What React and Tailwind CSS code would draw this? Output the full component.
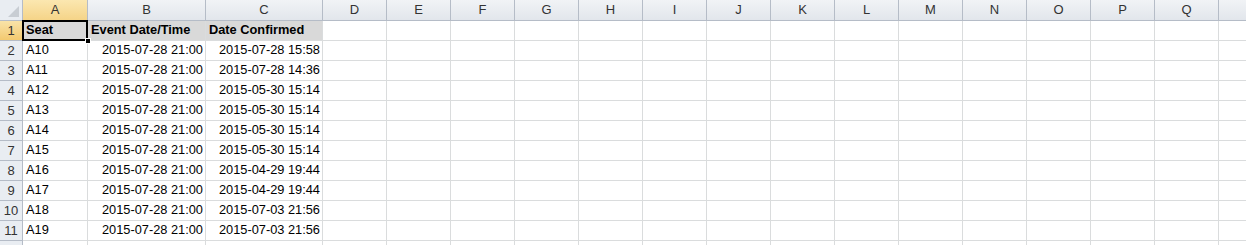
const cols = ["A", "B", "C", "D", "E", "F", "G", "H", "I", "J", "K", "L", "M", "N", "O", "P", "Q", ""];

const rows = [
  ["A10", "2015-07-28 21:00", "2015-07-28 15:58"],
  ["A11", "2015-07-28 21:00", "2015-07-28 14:36"],
  ["A12", "2015-07-28 21:00", "2015-05-30 15:14"],
  ["A13", "2015-07-28 21:00", "2015-05-30 15:14"],
  ["A14", "2015-07-28 21:00", "2015-05-30 15:14"],
  ["A15", "2015-07-28 21:00", "2015-05-30 15:14"],
  ["A16", "2015-07-28 21:00", "2015-04-29 19:44"],
  ["A17", "2015-07-28 21:00", "2015-04-29 19:44"],
  ["A18", "2015-07-28 21:00", "2015-07-03 21:56"],
  ["A19", "2015-07-28 21:00", "2015-07-03 21:56"],
];

// last column runs past the window edge, like in Excel (its letter is off screen)
const grid = "grid grid-cols-[23px_65px_118px_117px_repeat(15,64px)] w-max";

function RowHead({ n, active }) {
  return (
    <div
      className={
        "h-[20px] flex items-center justify-center border-r border-b border-[#b5bcc7] text-[13px] leading-none " +
        (active ? "bg-gradient-to-b from-[#f9e3a8] to-[#f3c96f] text-[#333]" : "bg-[#e9edf2] text-[#333]")
      }
    >
      {n}
    </div>
  );
}

function Cell({ children, right, className = "" }) {
  return (
    <div
      className={
        "h-[20px] border-r border-b border-[#dadcdd] flex items-center px-[2px] text-[12.8px] leading-none whitespace-nowrap text-black " +
        (right ? "justify-end " : "pl-[3px] ") +
        className
      }
    >
      {children}
    </div>
  );
}

export default function App() {
  return (
    <div className="w-[1246px] h-[245px] overflow-hidden bg-white" style={{ fontFamily: '"Liberation Sans", Arial, sans-serif' }}>
      {/* column headers */}
      <div className={grid + " h-[21px]"}>
        <div className="relative border-r border-b border-[#b5bcc7] bg-[#e9edf2]">
          <div className="absolute right-[3px] bottom-[3px] w-0 h-0 border-l-[11px] border-l-transparent border-b-[11px] border-b-[#c8cdd3]" />
        </div>
        {cols.map((c, i) => (
          <div
            key={i}
            className={
              "flex items-center justify-center border-r border-b border-[#b5bcc7] text-[13px] text-[#333] " +
              (c === "A" ? "bg-gradient-to-b from-[#fbe7b0] to-[#f5d488]" : "bg-gradient-to-b from-[#f1f3f6] to-[#e2e6ec]")
            }
          >
            {c}
          </div>
        ))}
      </div>

      {/* row 1 */}
      <div className={grid}>
        <RowHead n={1} active />
        <Cell className="bg-[#d9d9d9] font-bold relative">
          Seat
          <div className="absolute -left-px -top-px -right-px -bottom-px border-2 border-black pointer-events-none" />
          <div className="absolute -right-[4px] -bottom-[4px] w-[6px] h-[6px] bg-black border border-white z-10" />
        </Cell>
        <Cell className="bg-[#d9d9d9] font-bold">Event Date/Time</Cell>
        <Cell className="bg-[#d9d9d9] font-bold">Date Confirmed</Cell>
        {cols.slice(3).map((c, i) => (
          <Cell key={i} />
        ))}
      </div>

      {rows.map((r, i) => (
        <div key={i} className={grid}>
          <RowHead n={i + 2} />
          <Cell>{r[0]}</Cell>
          <Cell right>{r[1]}</Cell>
          <Cell right>{r[2]}</Cell>
          {cols.slice(3).map((c, j) => (
            <Cell key={j} />
          ))}
        </div>
      ))}

      {/* row 12, only its top edge shows */}
      <div className={grid}>
        <RowHead n="" />
        {cols.map((c, j) => (
          <Cell key={j} />
        ))}
      </div>
    </div>
  );
}
